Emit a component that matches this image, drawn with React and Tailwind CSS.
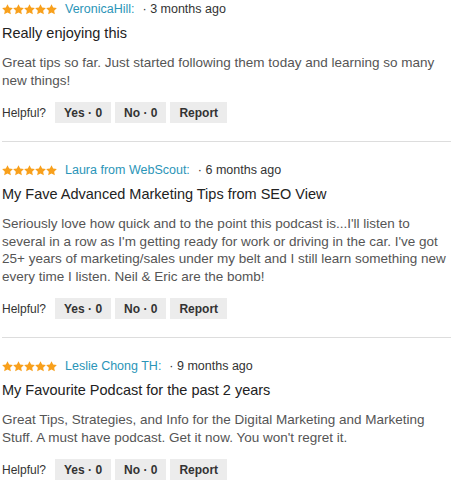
import React from "react";

const reviews = [
  {
    name: "VeronicaHill:",
    date: "3 months ago",
    title: "Really enjoying this",
    body: "Great tips so far. Just started following them today and learning so many new things!",
  },
  {
    name: "Laura from WebScout:",
    date: "6 months ago",
    title: "My Fave Advanced Marketing Tips from SEO View",
    body: "Seriously love how quick and to the point this podcast is...I'll listen to several in a row as I'm getting ready for work or driving in the car. I've got 25+ years of marketing/sales under my belt and I still learn something new every time I listen. Neil & Eric are the bomb!",
  },
  {
    name: "Leslie Chong TH:",
    date: "9 months ago",
    title: "My Favourite Podcast for the past 2 years",
    body: "Great Tips, Strategies, and Info for the Digital Marketing and Marketing Stuff. A must have podcast. Get it now. You won't regret it.",
  },
];

function Star() {
  return (
    <svg width="11" height="11" viewBox="0 0 24 24" className="block">
      <path
        fill="#f8a01c"
        d="M12 0.5l3.6 7.4 8.1 1-5.9 5.6 1.5 8.1L12 18.7l-7.3 3.9 1.5-8.1L0.3 8.9l8.1-1z"
      />
    </svg>
  );
}

function Review({ r, first, last }) {
  return (
    <div className={`${first ? "pt-[3px]" : "pt-[22px]"} ${last ? "" : "pb-[18px] border-b border-[#dddddd]"}`}>
      <div className="flex items-center h-[13px] text-[12.5px] leading-[13px]">
        <div className="flex">
          {[0, 1, 2, 3, 4].map((i) => (
            <Star key={i} />
          ))}
        </div>
        <span className="ml-[8px] text-[#2b95b8]">{r.name}</span>
        <span className="ml-[8px] text-[#333333]">· {r.date}</span>
      </div>
      <div className="mt-[7px] text-[14.5px] leading-[20px] text-[#222222]">{r.title}</div>
      <div className="mt-[11px] text-[13.5px] leading-[17.5px] text-[#555555]">{r.body}</div>
      <div className="mt-[13px] flex items-center gap-[4px] text-[12px]">
        <span className="text-[#333333] mr-[5px]">Helpful?</span>
        <span className="h-[21px] px-[9px] flex items-center bg-[#ececec] font-bold text-[#333333]">Yes · 0</span>
        <span className="h-[21px] px-[9px] flex items-center bg-[#ececec] font-bold text-[#333333]">No · 0</span>
        <span className="h-[21px] px-[9px] flex items-center bg-[#ececec] font-bold text-[#333333]">Report</span>
      </div>
    </div>
  );
}

export default function App() {
  return (
    <div className="w-[451px] h-[482px] overflow-hidden bg-white pl-[2px] font-['Liberation_Sans',Arial,sans-serif]">
      {reviews.map((r, i) => (
        <Review key={i} r={r} first={i === 0} last={i === reviews.length - 1} />
      ))}
    </div>
  );
}
